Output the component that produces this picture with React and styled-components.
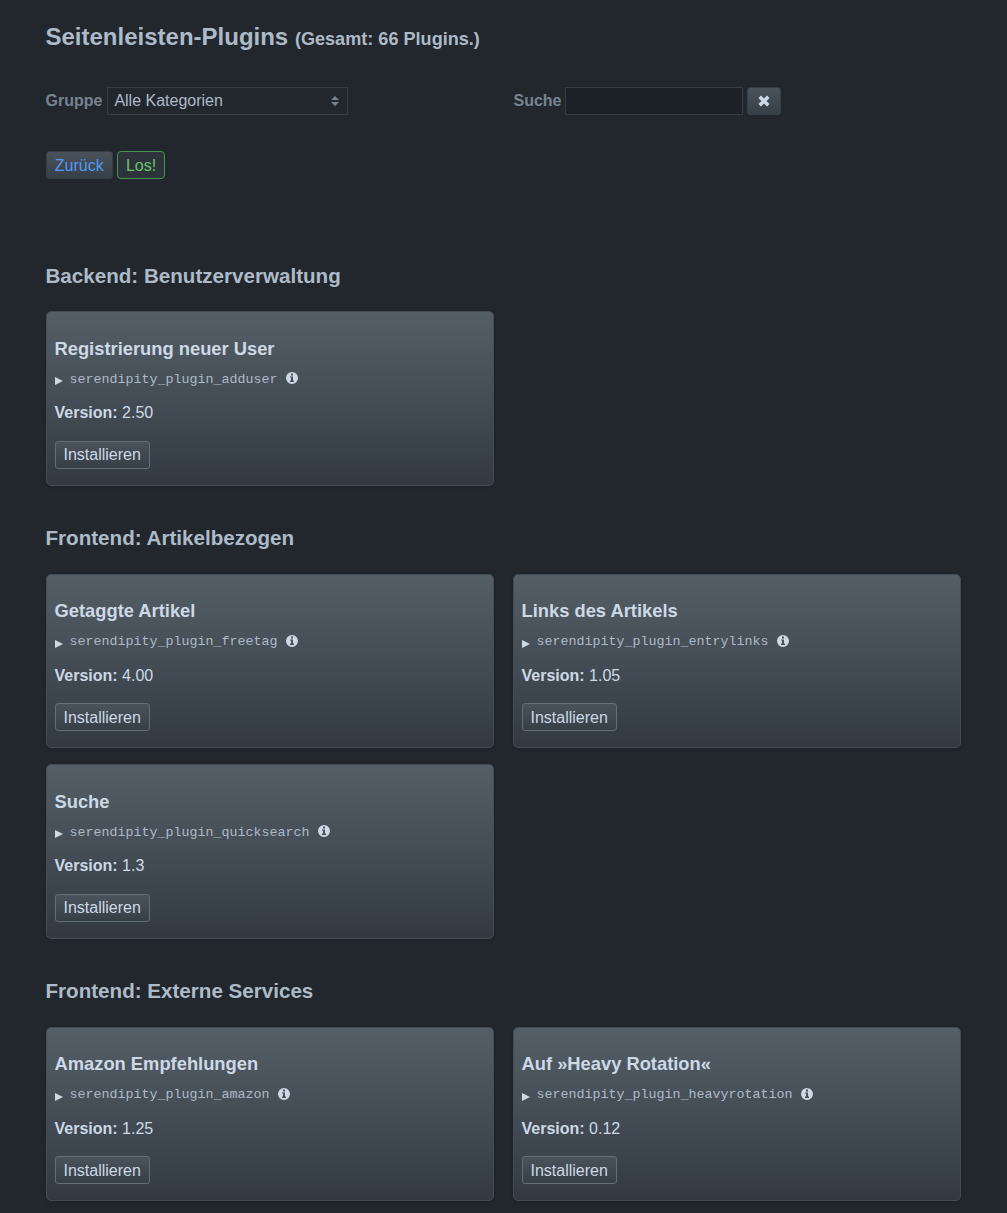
import React from "react";
import styled, { createGlobalStyle } from "styled-components";

const GlobalStyle = createGlobalStyle`
  * { box-sizing: border-box; }
  body {
    margin: 0;
    background: #22272e;
    color: #cdd9e5;
    font: 16px/24px "Liberation Sans", Arial, sans-serif;
  }
`;

const Page = styled.main`
  width: 1007px;
  height: 1213px;
  overflow: hidden;
  padding: 20px 46px 0 45.5px;
  background: #22272e;
`;

const PageTitle = styled.h2`
  margin: 0;
  height: 34px;
  font-size: 24px;
  line-height: 34px;
  color: #adbac7;
  small {
    font-size: 18.1px;
    line-height: 1;
  }
`;

const Filters = styled.div`
  display: grid;
  grid-template-columns: 448px 448px;
  column-gap: 20px;
  margin-top: 33px;
`;

const Field = styled.div`
  display: flex;
  align-items: center;
  height: 28px;
`;

const Label = styled.label`
  font-weight: bold;
  line-height: 28px;
  color: #768390;
  margin-right: ${(p) => p.$gap || "5px"};
`;

const Select = styled.button`
  display: flex;
  align-items: center;
  justify-content: space-between;
  width: 241px;
  height: 28px;
  padding: 0 8px 0 6px;
  border: 1px solid #373e47;
  background: #22272e;
  color: #adbac7;
  font: inherit;
`;

const SearchInput = styled.input`
  width: 178px;
  height: 28px;
  border: 1px solid #373e47;
  background: #1c2128;
  color: #adbac7;
  font: inherit;
`;

const Button = styled.button`
  display: inline-flex;
  align-items: center;
  justify-content: center;
  height: 28px;
  padding: 0.6px 8px 0;
  border: 1px solid ${(p) => p.$border || "#373e47"};
  border-radius: ${(p) => p.$radius || "3px"};
  background: ${(p) => p.$fill || "linear-gradient(#4a535c, #363e46)"};
  color: ${(p) => p.$color || "#cdd9e5"};
  font: inherit;
  line-height: 24px;
`;

const ClearButton = styled(Button)`
  width: 34px;
  margin-left: 4px;
  padding: 0;
`;

const Actions = styled.div`
  display: flex;
  gap: 4px;
  margin-top: 36px;
  margin-bottom: 81px;
`;

const ActionButton = styled(Button)`
  padding-top: 2px;
  &:first-child {
    width: 67.4px;
  }
`;

const Section = styled.section`
  margin-bottom: 36.4px;
`;

const SectionTitle = styled.h3`
  margin: 0 0 19.4px;
  font-size: 20.6px;
  line-height: 32px;
  color: #adbac7;
`;

const PluginGrid = styled.div`
  display: grid;
  grid-template-columns: 448px 448px;
  gap: 16px 19px;
`;

const Card = styled.article`
  height: 174.6px;
  padding: 22.6px 8px 0;
  border: 1px solid #444c56;
  border-radius: 5px;
  background: linear-gradient(#535e67, #444d56 50%, #323941);
  box-shadow: 0 1px 3px #1c2128;
`;

const CardTitle = styled.h4`
  margin: 0;
  font-size: 18.33px;
  line-height: 28px;
`;

const Summary = styled.div`
  display: flex;
  align-items: center;
  height: 28px;
  margin-top: 3px;
`;

const Marker = styled.svg`
  width: 8px;
  height: 8px;
  margin: 3px 7px 0 0;
  fill: #cdd9e5;
`;

const Identifier = styled.code`
  font: 13.333px/20px "Liberation Mono", "Courier New", monospace;
  color: #adbac7;
  margin-right: 9px;
`;

const Info = styled.svg`
  width: 12px;
  height: 12px;
  fill: #cdd9e5;
  margin-bottom: 3.6px;
`;

const Version = styled.p`
  margin: 7.3px 0 15.7px;
`;

const plugins = [
  {
    title: "Backend: Benutzerverwaltung",
    items: [["Registrierung neuer User", "adduser", "2.50"]],
  },
  {
    title: "Frontend: Artikelbezogen",
    items: [
      ["Getaggte Artikel", "freetag", "4.00"],
      ["Links des Artikels", "entrylinks", "1.05"],
      ["Suche", "quicksearch", "1.3"],
    ],
  },
  {
    title: "Frontend: Externe Services",
    items: [
      ["Amazon Empfehlungen", "amazon", "1.25"],
      ["Auf »Heavy Rotation«", "heavyrotation", "0.12"],
    ],
  },
];

function PluginCard({ name, id, version }) {
  return (
    <Card>
      <CardTitle>{name}</CardTitle>
      <Summary>
        <Marker viewBox="0 0 8 8"><path d="M0 0 8 4 0 8Z" /></Marker>
        <Identifier>serendipity_plugin_{id}</Identifier>
        <Info viewBox="0 0 12 12">
          <path fillRule="evenodd" d="M6 0a6 6 0 1 1 0 12A6 6 0 0 1 6 0ZM5 1.6v1.8h2V1.6ZM4 4.4v1.2h1v3H4v1.4h4V8.6H7V4.4Z" />
        </Info>
      </Summary>
      <Version><b>Version:</b> {version}</Version>
      <Button $border="#636e7b">Installieren</Button>
    </Card>
  );
}

export default function App() {
  return (
    <>
      <GlobalStyle />
      <Page>
        <PageTitle>Seitenleisten-Plugins <small>(Gesamt: 66 Plugins.)</small></PageTitle>
        <Filters>
          <Field>
            <Label>Gruppe</Label>
            <Select>
              Alle Kategorien
              <svg width="8" height="10" viewBox="0 0 8 10" fill="#768390">
                <path d="M4 0 8 4H0ZM0 6h8L4 10Z" />
              </svg>
            </Select>
          </Field>
          <Field>
            <Label htmlFor="search" $gap="3px">Suche</Label>
            <SearchInput id="search" />
            <ClearButton>
              <svg width="12" height="12" viewBox="0 0 12 12" stroke="#cdd9e5" strokeWidth="3.6">
                <path d="m1.7 1.7 8.6 8.6M10.3 1.7 1.7 10.3" />
              </svg>
            </ClearButton>
          </Field>
        </Filters>
        <Actions>
          <ActionButton $color="#539bf5">Zurück</ActionButton>
          <ActionButton $color="#6bc46d" $border="#46954a" $fill="#2d333b" $radius="4px">Los!</ActionButton>
        </Actions>
        {plugins.map((group) => (
          <Section key={group.title}>
            <SectionTitle>{group.title}</SectionTitle>
            <PluginGrid>
              {group.items.map(([name, id, version]) => (
                <PluginCard key={id} name={name} id={id} version={version} />
              ))}
            </PluginGrid>
          </Section>
        ))}
      </Page>
    </>
  );
}
